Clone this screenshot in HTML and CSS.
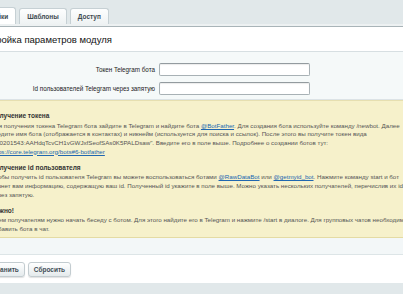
FILE: index.html
```html
<!DOCTYPE html>
<html lang="ru">
<head>
<meta charset="utf-8">
<title>Настройка параметров модуля</title>
<link rel="stylesheet" href="styles.css">
</head>
<body>
<div class="tabs">
  <div class="tab active">Настройки</div>
  <div class="tab">Шаблоны</div>
  <div class="tab">Доступ</div>
</div>
<div class="tab-base"></div>
<div class="title-bar"><h1 class="title">Настройка параметров модуля</h1></div>
<div class="form-area">
  <div class="form-grid">
    <label class="label" for="token">Токен Telegram бота</label>
    <input class="field" id="token" type="text">
    <label class="label" for="ids">Id пользователей Telegram через запятую</label>
    <input class="field" id="ids" type="text">
  </div>
</div>
<div class="note">
  <div class="note-inner">
    <h3 class="note-head">Получение токена</h3>
    <p class="note-text">Для получения токена Telegram бота зайдите в Telegram и найдите бота <a href="#">@BotFather</a>. Для создания бота используйте команду /newbot. Далее<br>введите имя бота (отображается в контактах) и никнейм (используется для поиска и ссылок). После этого вы получите токен вида<br>"110201543:AAHdqTcvCH1vGWJxfSeofSAs0K5PALDsaw". Введите его в поле выше. Подробнее о создании ботов тут:<br><a href="#">https://core.telegram.org/bots#6-botfather</a></p>
    <h3 class="note-head">Получение id пользователя</h3>
    <p class="note-text">Чтобы получить id пользователя Telegram вы можете воспользоваться ботами <a href="#">@RawDataBot</a> или <a href="#">@getmyid_bot</a>. Нажмите команду start и бот<br>вернет вам информацию, содержащую ваш id. Полученный id укажите в поле выше. Можно указать нескольких получателей, перечислив их id<br>через запятую.</p>
    <h3 class="note-head">Важно!</h3>
    <p class="note-text last">Всем получателям нужно начать беседу с ботом. Для этого найдите его в Telegram и нажмите /start в диалоге. Для групповых чатов необходимо<br>добавить бота в чат.</p>
  </div>
</div>
<div class="strip"></div>
<div class="buttons">
  <div class="btn-row">
    <button class="btn" type="button">Сохранить</button>
    <button class="btn" type="button">Сбросить</button>
  </div>
</div>
</body>
</html>
```
FILE: styles.css
```css
html, body {
  margin: 0;
  padding: 0;
}
body {
  width: 403px;
  height: 294px;
  overflow: hidden;
  background: #e1e8ea;
  font-family: "Liberation Sans", Arial, sans-serif;
}
.tabs {
  display: flex;
  align-items: flex-end;
  gap: 3px;
  height: 17px;
  padding-top: 7px;
  margin-left: -34px;
}
.tab {
  box-sizing: border-box;
  height: 16px;
  padding: 0 7px;
  display: flex;
  align-items: center;
  border: 1px solid #c6d0d4;
  border-bottom: 0;
  border-radius: 3px 3px 0 0;
  background: linear-gradient(#fdfefe, #eef2f3);
  font-size: 6.5px;
  font-weight: bold;
  color: #3d4a50;
}
.tab.active {
  height: 17px;
  background: #fff;
}
.tab-base {
  height: 2px;
  background: #edf1f2;
}
.title-bar {
  height: 24px;
  display: flex;
  align-items: center;
  background: #fff;
  border-top: 1px solid #a9b4b8;
  border-bottom: 1px solid #d7dfe2;
  overflow: hidden;
}
.title {
  margin: 0 0 0 -25px;
  font-size: 9.5px;
  font-weight: normal;
  color: #111;
  white-space: nowrap;
}
.form-area {
  background: #f5f9f9;
  border-bottom: 1px solid #dce3e6;
  padding: 11px 0 4px;
}
.form-grid {
  display: grid;
  grid-template-columns: 155px 151px;
  grid-auto-rows: 13px;
  column-gap: 4px;
  row-gap: 6px;
}
.label {
  align-self: center;
  text-align: right;
  font-size: 6.3px;
  color: #222;
  white-space: nowrap;
}
.field {
  box-sizing: border-box;
  width: 151px;
  height: 13px;
  margin: 0;
  padding: 0 3px;
  border: 1px solid #a8b1b5;
  border-top-color: #939b9f;
  border-radius: 2px;
  background: #fff;
  box-shadow: inset 0 1px 1px rgba(0, 0, 0, 0.08);
}
.note {
  background: #f6f1cb;
  border-top: 1px solid #e6dfb0;
  border-bottom: 1px solid #e4dba4;
  padding: 10px 0 4px;
  overflow: hidden;
}
.note-inner {
  margin-left: -9px;
  white-space: nowrap;
  font-size: 6.2px;
  line-height: 8.7px;
  color: #555;
}
.note-head {
  margin: 0 0 1.5px;
  font-size: 6.5px;
  line-height: 9px;
  font-weight: bold;
  color: #333;
}
.note-text {
  margin: 0 0 6.3px;
}
.note-text.last {
  margin-bottom: 0;
}
.note-text a {
  color: #2067b0;
  text-decoration: underline;
}
.strip {
  height: 16px;
  background: #f3f7f8;
  border-bottom: 1px solid #dde5e7;
}
.buttons {
  box-sizing: border-box;
  height: 28px;
  padding-top: 7px;
  background: #fff;
}
.btn-row {
  display: flex;
  gap: 3px;
  margin-left: -22px;
}
.btn {
  box-sizing: border-box;
  height: 15px;
  margin: 0;
  padding: 0 5px;
  border: 1px solid #c3ccd0;
  border-radius: 3px;
  background: linear-gradient(#ffffff, #e4eaec);
  box-shadow: 0 1px 1px rgba(0, 0, 0, 0.12);
  font-family: "Liberation Sans", Arial, sans-serif;
  font-size: 6.5px;
  font-weight: bold;
  color: #3f4d55;
}
```
